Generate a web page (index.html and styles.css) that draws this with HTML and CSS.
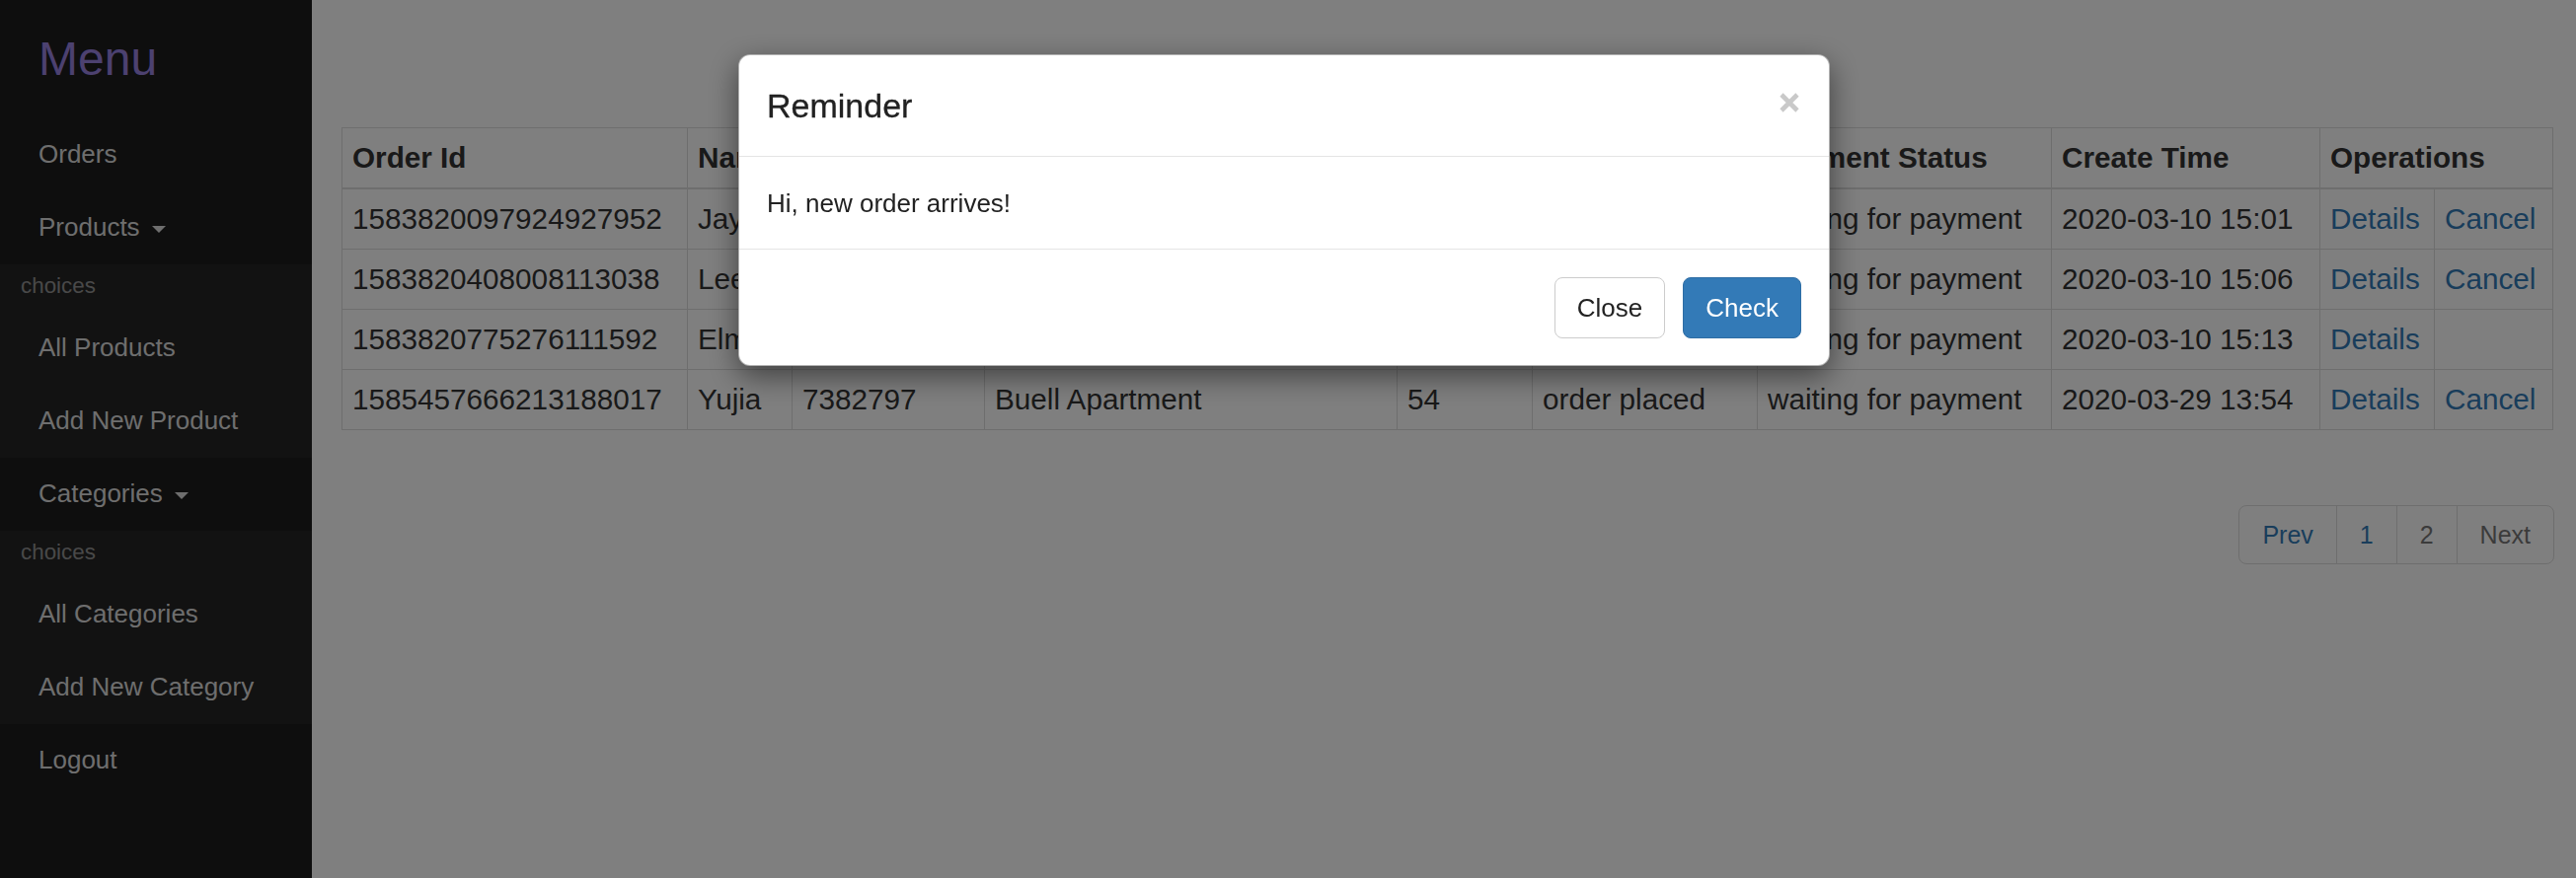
FILE: index.html
```html
<!DOCTYPE html>
<html lang="en">
<head>
<meta charset="utf-8">
<title>Orders</title>
<link rel="stylesheet" href="styles.css">
</head>
<body>
<div class="layout">
  <aside class="sidebar">
    <div class="brand">Menu</div>
    <ul class="nav">
      <li class="item">Orders</li>
      <li class="item">Products <span class="caret"></span></li>
      <li class="sub">
        <div class="sub-head">choices</div>
        <div class="item">All Products</div>
        <div class="item">Add New Product</div>
      </li>
      <li class="item">Categories <span class="caret"></span></li>
      <li class="sub">
        <div class="sub-head">choices</div>
        <div class="item">All Categories</div>
        <div class="item">Add New Category</div>
      </li>
      <li class="item">Logout</li>
    </ul>
  </aside>

  <main class="content">
    <table class="orders">
      <colgroup>
        <col class="w-id"><col class="w-name"><col class="w-phone"><col class="w-addr"><col class="w-total">
        <col class="w-ostatus"><col class="w-pstatus"><col class="w-time"><col class="w-op1"><col class="w-op2">
      </colgroup>
      <thead>
        <tr>
          <th>Order Id</th><th>Name</th><th>Phone</th><th>Address</th><th>Total</th>
          <th>Order Status</th><th>Payment Status</th><th>Create Time</th><th colspan="2">Operations</th>
        </tr>
      </thead>
      <tbody>
        <tr>
          <td>1583820097924927952</td><td>Jay</td><td>6263788</td><td>Village Apartment</td><td>32</td>
          <td>order placed</td><td>waiting for payment</td><td>2020-03-10 15:01</td>
          <td><a href="#">Details</a></td><td><a href="#">Cancel</a></td>
        </tr>
        <tr>
          <td>1583820408008113038</td><td>Lee</td><td>2137461</td><td>Gateway Plaza</td><td>18</td>
          <td>order placed</td><td>waiting for payment</td><td>2020-03-10 15:06</td>
          <td><a href="#">Details</a></td><td><a href="#">Cancel</a></td>
        </tr>
        <tr>
          <td>1583820775276111592</td><td>Elma</td><td>5559012</td><td>Cardinal Gardens</td><td>27</td>
          <td>order canceled</td><td>waiting for payment</td><td>2020-03-10 15:13</td>
          <td><a href="#">Details</a></td><td></td>
        </tr>
        <tr>
          <td>1585457666213188017</td><td>Yujia</td><td>7382797</td><td>Buell Apartment</td><td>54</td>
          <td>order placed</td><td>waiting for payment</td><td>2020-03-29 13:54</td>
          <td><a href="#">Details</a></td><td><a href="#">Cancel</a></td>
        </tr>
      </tbody>
    </table>

    <nav class="pager">
      <a href="#" class="page link">Prev</a>
      <a href="#" class="page link">1</a>
      <a href="#" class="page muted">2</a>
      <a href="#" class="page muted">Next</a>
    </nav>
  </main>
</div>

<div class="backdrop"></div>

<div class="modal">
  <div class="dialog">
    <div class="dialog-head">
      <h4 class="dialog-title">Reminder</h4>
      <button class="close" type="button" aria-label="Close">
        <svg width="20" height="20" viewBox="0 0 20 20"><path d="M2 2 L18 18 M18 2 L2 18" stroke="#c9c9c9" stroke-width="4.6" fill="none"/></svg>
      </button>
    </div>
    <div class="dialog-body">Hi, new order arrives!</div>
    <div class="dialog-foot">
      <button class="btn btn-default" type="button">Close</button>
      <button class="btn btn-primary" type="button">Check</button>
    </div>
  </div>
</div>
</body>
</html>
```

FILE: styles.css
```css
* { box-sizing: border-box; }

html, body {
  margin: 0;
  padding: 0;
  height: 100%;
}

body {
  font-family: "Liberation Sans", Arial, Helvetica, sans-serif;
  color: #333;
  background: #fff;
  overflow: hidden;
}

.layout {
  display: flex;
  min-height: 890px;
}

/* Sidebar */
.sidebar {
  width: 316px;
  flex: 0 0 316px;
  background: #1c1c1c;
  min-height: 890px;
}

.brand {
  height: 120px;
  line-height: 120px;
  padding-left: 39px;
  font-size: 48px;
  color: #9882e0;
}

.nav {
  list-style: none;
  margin: 0;
  padding: 0;
}

.item {
  height: 74px;
  line-height: 72px;
  padding: 0 0 2px 39px;
  font-size: 26px;
  color: #dcdcdc;
  white-space: nowrap;
}

.caret {
  display: inline-block;
  width: 0;
  height: 0;
  margin-left: 5px;
  vertical-align: middle;
  border-top: 7px solid #dcdcdc;
  border-left: 7px solid transparent;
  border-right: 7px solid transparent;
}

.sub {
  background: #252525;
}

.sub-head {
  height: 48px;
  line-height: 44px;
  padding: 0 0 4px 21px;
  font-size: 22.4px;
  color: #929292;
}

/* Content */
.content {
  flex: 1 1 auto;
  padding: 129px 24px 0 30px;
}

.orders {
  width: 100%;
  table-layout: fixed;
  border-collapse: collapse;
  font-size: 29.7px;
  line-height: 40px;
}

.w-id { width: 350px; }
.w-name { width: 106px; }
.w-phone { width: 195px; }
.w-addr { width: 418px; }
.w-total { width: 137px; }
.w-ostatus { width: 228px; }
.w-pstatus { width: 298px; }
.w-time { width: 272px; }
.w-op1 { width: 116px; }
.w-op2 { width: 120px; }

.orders th,
.orders td {
  border: 1px solid #ddd;
  padding: 10px 10px;
  text-align: left;
  white-space: nowrap;
  overflow: hidden;
}

.orders th {
  font-weight: bold;
  border-bottom-width: 2px;
}

.orders a {
  color: #337ab7;
  text-decoration: none;
}

.pager {
  display: flex;
  justify-content: flex-end;
  margin-top: 76px;
  margin-right: -1px;
}

.page {
  display: block;
  height: 60px;
  line-height: 58px;
  padding: 0 23px;
  font-size: 25px;
  border: 1px solid #ddd;
  background: #fff;
  text-decoration: none;
  margin-left: -1px;
}

.page:first-child {
  border-radius: 8px 0 0 8px;
  margin-left: 0;
}

.page:last-child {
  border-radius: 0 8px 8px 0;
}

.link { color: #337ab7; }
.muted { color: #777; }

/* Modal overlay */
.backdrop {
  position: fixed;
  inset: 0;
  background: rgba(0, 0, 0, 0.5);
}

.modal {
  position: fixed;
  inset: 0;
  padding: 55px 0 0 748px;
}

.dialog {
  width: 1106px;
  background: #fff;
  border: 1px solid rgba(0, 0, 0, 0.3);
  border-radius: 12px;
  box-shadow: 0 10px 30px rgba(0, 0, 0, 0.5);
}

.dialog-head {
  display: flex;
  justify-content: space-between;
  align-items: flex-start;
  padding: 30px 30px 30px 28px;
  border-bottom: 1px solid #e5e5e5;
}

.dialog-title {
  margin: 0;
  font-size: 34px;
  line-height: 42px;
  font-weight: normal;
  color: #222;
  -webkit-text-stroke: 0.3px #222;
}

.close {
  margin: 8px 0 0 0;
  padding: 0;
  border: 0;
  background: transparent;
  width: 20px;
  height: 20px;
  display: block;
}

.close svg { display: block; }

.dialog-body {
  padding: 30px 28px 29px;
  font-size: 26px;
  line-height: 34px;
  color: #222;
}

.dialog-foot {
  display: flex;
  justify-content: flex-end;
  gap: 18px;
  padding: 28px 28px 27px;
  border-top: 1px solid #e5e5e5;
}

.btn {
  font-family: "Liberation Sans", Arial, Helvetica, sans-serif;
  font-size: 26px;
  line-height: 40px;
  padding: 10px 22px;
  border: 1px solid transparent;
  border-radius: 8px;
  cursor: pointer;
}

.btn-default {
  background: #fff;
  color: #222;
  border-color: #ccc;
}

.btn-primary {
  background: #337ab7;
  color: #fff;
  border-color: #2e6da4;
}
```
